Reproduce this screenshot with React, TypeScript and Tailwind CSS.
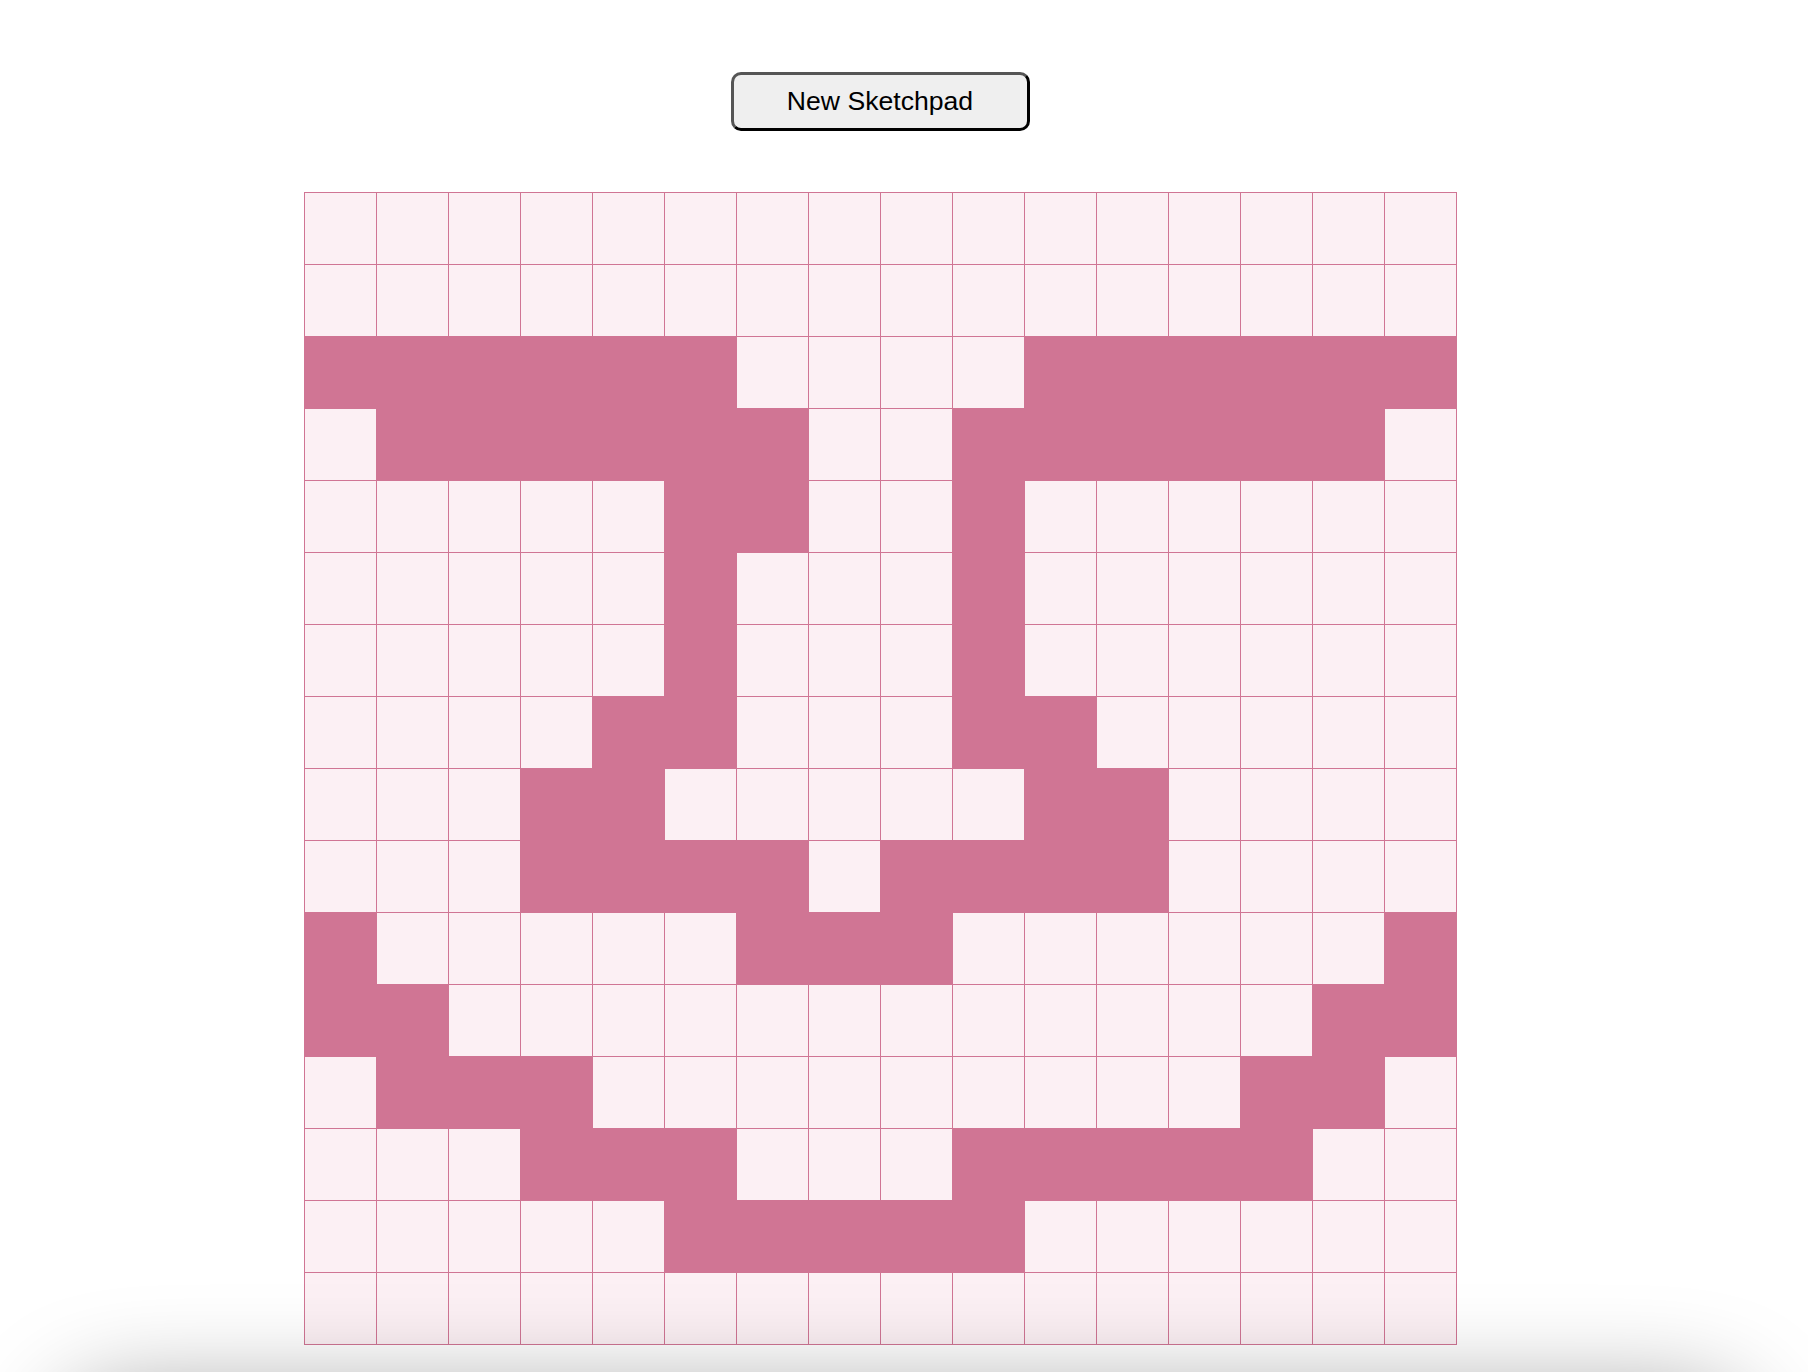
const PATTERN = [
  "0000000000000000",
  "0000000000000000",
  "1111110000111111",
  "0111111001111110",
  "0000011001000000",
  "0000010001000000",
  "0000010001000000",
  "0000110001100000",
  "0001100000110000",
  "0001111011110000",
  "1000001110000001",
  "1100000000000011",
  "0111000000000110",
  "0001110001111100",
  "0000011111000000",
  "0000000000000000",
];

function Cell({ filled }: { filled: boolean }) {
  return (
    <div
      className={
        filled
          ? "w-[72px] h-[72px] border-r border-b border-[#d07594] bg-[#d07594]"
          : "w-[72px] h-[72px] border-r border-b border-[#d07594] bg-[#fcf0f4]"
      }
    />
  );
}

export default function App() {
  return (
    <div className="relative min-h-[1372px] bg-white overflow-hidden">
      <div className="w-[1760px] flex flex-col items-center pt-[72px]">
        <button
          className="w-[299px] h-[59px] rounded-[10px] border-[3px] border-t-[#555555] border-l-[#555555] border-r-black border-b-black bg-[#efefef] text-black text-[26.6px] leading-none"
          style={{ fontFamily: '"Liberation Sans", Arial, sans-serif' }}
        >
          New Sketchpad
        </button>

        <div className="mt-[61px] grid grid-cols-[repeat(16,72px)] border-t border-l border-[#d07594]">
          {PATTERN.map((row, r) =>
            row.split("").map((c, i) => <Cell key={`${r}-${i}`} filled={c === "1"} />)
          )}
        </div>
      </div>

      {/* soft shadow creeping up from the bottom edge */}
      <div className="pointer-events-none fixed left-[60px] right-[60px] top-[1395px] h-[200px] rounded-[60px] bg-[#d6d6d6] shadow-[0_0_100px_0_rgba(0,0,0,0.4)]" />
    </div>
  );
}
